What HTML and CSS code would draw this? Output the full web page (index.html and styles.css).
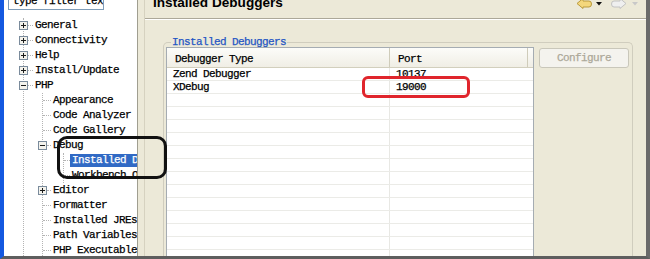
FILE: index.html
```html
<!DOCTYPE html>
<html lang="en">
<head>
  <meta charset="UTF-8">
  <title>Installed Debuggers</title>
  <link rel="stylesheet" href="styles.css">
</head>
<body>
  <div class="shot">
    <div class="window">
      <div class="sidebar">
        <div class="filter">type filter text</div>
        <ul class="tree">
          <li><div class="row"><svg class="tog" viewBox="0 0 9 9"><rect x="0.5" y="0.5" width="8" height="8" fill="#f3f2ec" stroke="#7a8b9c"/><path d="M2 4.5h5M4.5 2v5" stroke="#1a1a1a"/></svg><span class="dash d5"></span><span class="lbl">General</span></div></li>
          <li><div class="row"><svg class="tog" viewBox="0 0 9 9"><rect x="0.5" y="0.5" width="8" height="8" fill="#f3f2ec" stroke="#7a8b9c"/><path d="M2 4.5h5M4.5 2v5" stroke="#1a1a1a"/></svg><span class="dash d5"></span><span class="lbl">Connectivity</span></div></li>
          <li><div class="row"><svg class="tog" viewBox="0 0 9 9"><rect x="0.5" y="0.5" width="8" height="8" fill="#f3f2ec" stroke="#7a8b9c"/><path d="M2 4.5h5M4.5 2v5" stroke="#1a1a1a"/></svg><span class="dash d5"></span><span class="lbl">Help</span></div></li>
          <li><div class="row"><svg class="tog" viewBox="0 0 9 9"><rect x="0.5" y="0.5" width="8" height="8" fill="#f3f2ec" stroke="#7a8b9c"/><path d="M2 4.5h5M4.5 2v5" stroke="#1a1a1a"/></svg><span class="dash d5"></span><span class="lbl">Install/Update</span></div></li>
          <li>
            <div class="row"><svg class="tog" viewBox="0 0 9 9"><rect x="0.5" y="0.5" width="8" height="8" fill="#f3f2ec" stroke="#7a8b9c"/><path d="M2 4.5h5" stroke="#1a1a1a"/></svg><span class="dash d5"></span><span class="lbl">PHP</span></div>
            <ul class="sub1">
              <li><div class="row"><span class="dash d8"></span><span class="lbl">Appearance</span></div></li>
              <li><div class="row"><span class="dash d8"></span><span class="lbl">Code Analyzer</span></div></li>
              <li><div class="row"><span class="dash d8"></span><span class="lbl">Code Gallery</span></div></li>
              <li>
                <div class="row"><svg class="tog" viewBox="0 0 9 9"><rect x="0.5" y="0.5" width="8" height="8" fill="#f3f2ec" stroke="#7a8b9c"/><path d="M2 4.5h5" stroke="#1a1a1a"/></svg><span class="dash d4"></span><span class="lbl">Debug</span></div>
                <ul class="sub2">
                  <li><div class="row"><span class="dash d6"></span><span class="lbl sel">Installed Debuggers</span></div></li>
                  <li><div class="row"><span class="dash d6"></span><span class="lbl">Workbench Options</span></div></li>
                </ul>
              </li>
              <li><div class="row"><svg class="tog" viewBox="0 0 9 9"><rect x="0.5" y="0.5" width="8" height="8" fill="#f3f2ec" stroke="#7a8b9c"/><path d="M2 4.5h5M4.5 2v5" stroke="#1a1a1a"/></svg><span class="dash d4"></span><span class="lbl">Editor</span></div></li>
              <li><div class="row"><span class="dash d8"></span><span class="lbl">Formatter</span></div></li>
              <li><div class="row"><span class="dash d8"></span><span class="lbl">Installed JREs</span></div></li>
              <li><div class="row"><span class="dash d8"></span><span class="lbl">Path Variables</span></div></li>
              <li><div class="row"><span class="dash d8"></span><span class="lbl">PHP Executables</span></div></li>
            </ul>
          </li>
        </ul>
      </div>
      <div class="sash"></div>
      <div class="panel">
        <div class="panel-head">
          <span class="title">Installed Debuggers</span>
          <svg class="nav" width="66" height="13" viewBox="0 0 66 13">
            <path d="M2 7.5 L8 2.5 L8 5 L14 5 Q16.5 5 16.5 8 Q16.5 11 14 11 L8 11 L8 12.5 Z" fill="#f4d77c" stroke="#b99a3c"/>
            <path d="M21 6 L27 6 L24 9.5 Z" fill="#111"/>
            <path d="M51 7.5 L45 2.5 L45 5 L39 5 Q36.5 5 36.5 8 Q36.5 11 39 11 L45 11 L45 12.5 Z" fill="#efefef" stroke="#c2c2c2"/>
            <path d="M57 6 L63 6 L60 9.5 Z" fill="#c8c8c8"/>
          </svg>
        </div>
        <div class="group">
          <span class="group-title">Installed Debuggers</span>
          <div class="group-body">
            <div class="table">
              <div class="thead">
                <div class="th c1">Debugger Type</div>
                <div class="th c2">Port</div>
              </div>
              <div class="tr"><div class="td c1">Zend Debugger</div><div class="td">10137</div></div>
              <div class="tr"><div class="td c1">XDebug</div><div class="td">19000</div></div>
              <div class="tr"><div class="td c1"></div><div class="td"></div></div>
              <div class="tr"><div class="td c1"></div><div class="td"></div></div>
              <div class="tr"><div class="td c1"></div><div class="td"></div></div>
              <div class="tr"><div class="td c1"></div><div class="td"></div></div>
              <div class="tr"><div class="td c1"></div><div class="td"></div></div>
              <div class="tr"><div class="td c1"></div><div class="td"></div></div>
              <div class="tr"><div class="td c1"></div><div class="td"></div></div>
              <div class="tr"><div class="td c1"></div><div class="td"></div></div>
              <div class="tr"><div class="td c1"></div><div class="td"></div></div>
              <div class="tr"><div class="td c1"></div><div class="td"></div></div>
              <div class="tr"><div class="td c1"></div><div class="td"></div></div>
              <div class="tr"><div class="td c1"></div><div class="td"></div></div>
              <div class="tr"><div class="td c1"></div><div class="td"></div></div>
            </div>
            <div class="btn">Configure</div>
          </div>
        </div>
      </div>
    </div>
    <div class="mark mark-black"></div>
    <div class="mark mark-red"></div>
  </div>
</body>
</html>
```

FILE: styles.css
```css
body {
  margin: 0;
  width: 650px;
  height: 259px;
  overflow: hidden;
  font-family: "Liberation Mono", monospace;
  font-size: 11px;
  letter-spacing: -0.6px;
  color: #000;
  -webkit-text-stroke: 0.25px currentColor;
}
.shot {
  position: relative;
  width: 650px;
  height: 259px;
}
.window {
  display: flex;
  height: 259px;
  box-sizing: border-box;
  background: #ece9d8;
  border-left: 4px solid #1458e0;
  border-right: 4px solid #6a6a6a;
  border-bottom: 3px solid #5e5e5e;
  overflow: hidden;
}

/* left tree */
.sidebar {
  width: 133px;
  flex: none;
  background: #fff;
  border-right: 1px solid #a09e90;
  overflow: hidden;
}
.filter {
  width: 96px;
  height: 20px;
  box-sizing: border-box;
  margin: -10px 0 0 4px;
  padding: 3px 0 0 4px;
  border: 1px solid #7f9db9;
  line-height: 15px;
  white-space: nowrap;
  overflow: hidden;
}
.tree, .tree ul {
  list-style: none;
  padding: 0;
  margin: 0;
  border-left: 1px dotted #b4b4b4;
}
.tree {
  margin: 8px 0 0 19px;
}
.tree .sub1 {
  margin-left: 18px;
}
.tree .sub2 {
  margin-left: 20px;
}
.row {
  height: 15px;
  display: flex;
  align-items: center;
  white-space: nowrap;
}
.tog {
  width: 9px;
  height: 9px;
  flex: none;
  margin-left: -5px;
  display: block;
}
.dash {
  flex: none;
  height: 0;
  border-top: 1px dotted #b4b4b4;
}
.d4 { width: 4px; }
.d5 { width: 5px; }
.d6 { width: 6px; }
.d8 { width: 8px; }
.lbl {
  padding: 0 2px;
  line-height: 13px;
}
.sel {
  background: #316ac5;
  color: #fff;
}

.sash {
  width: 6px;
  flex: none;
}

/* right page */
.panel {
  flex: 1;
  min-width: 0;
  display: flex;
  flex-direction: column;
  border-left: 1px solid #d6d2c0;
}
.panel-head {
  height: 18px;
  flex: none;
  display: flex;
  border-bottom: 1px solid #aca899;
  box-shadow: 0 1px 0 #fff;
}
.title {
  margin: -4px 0 0 8px;
  font: bold 13.6px/14px "Liberation Sans", Arial, sans-serif;
  letter-spacing: 0;
  -webkit-text-stroke: 0;
}
.nav {
  margin: -4px 5px 0 auto;
  flex: none;
}
.group {
  flex: 1;
  min-height: 0;
  display: flex;
  flex-direction: column;
  margin: 23px 13px 0 18px;
  padding: 0 3px 0 2px;
  border: 1px solid #d0cdbe;
  border-bottom: 0;
  border-radius: 5px 5px 0 0;
}
.group-title {
  align-self: flex-start;
  height: 12px;
  line-height: 12px;
  margin: -7px 0 -1px 5px;
  padding: 0 1px;
  background: #ece9d8;
  color: #2456c4;
}
.group-body {
  flex: 1;
  min-height: 0;
  display: flex;
  gap: 5px;
}
.table {
  width: 368px;
  flex: none;
  box-sizing: border-box;
  border: 1px solid #a5acb2;
  border-bottom: 0;
  background: #fff;
  overflow: hidden;
}
.thead {
  display: flex;
  height: 20px;
  box-sizing: border-box;
  border-bottom: 1px solid #d2cfbd;
  background: linear-gradient(#fcfcf9, #f0eee5);
}
.th {
  box-sizing: border-box;
  padding: 4px 0 0 8px;
  line-height: 15px;
  border-right: 1px solid #cfccba;
}
.th.c1 { width: 223px; }
.th.c2 { width: 138px; }
.tr {
  display: flex;
  height: 13px;
  box-sizing: border-box;
  border-bottom: 1px solid #ebebe7;
}
.td {
  box-sizing: border-box;
  padding-left: 6px;
  line-height: 13px;
  white-space: nowrap;
}
.td.c1 {
  width: 223px;
  border-right: 1px solid #e8e8e4;
}
.btn {
  width: 90px;
  height: 20px;
  flex: none;
  box-sizing: border-box;
  margin-top: 1px;
  padding-top: 2px;
  border: 1px solid #c9c7ba;
  border-radius: 3px;
  background: #f4f3ee;
  color: #aca899;
  text-align: center;
  line-height: 15px;
}

/* annotations drawn over the screenshot */
.mark {
  position: absolute;
  box-sizing: border-box;
}
.mark-black {
  left: 57px;
  top: 136px;
  width: 110px;
  height: 43px;
  border: 3px solid #111;
  border-radius: 10px;
}
.mark-red {
  left: 362px;
  top: 76px;
  width: 108px;
  height: 22px;
  border: 3px solid #e0252c;
  border-radius: 6px;
}
```
